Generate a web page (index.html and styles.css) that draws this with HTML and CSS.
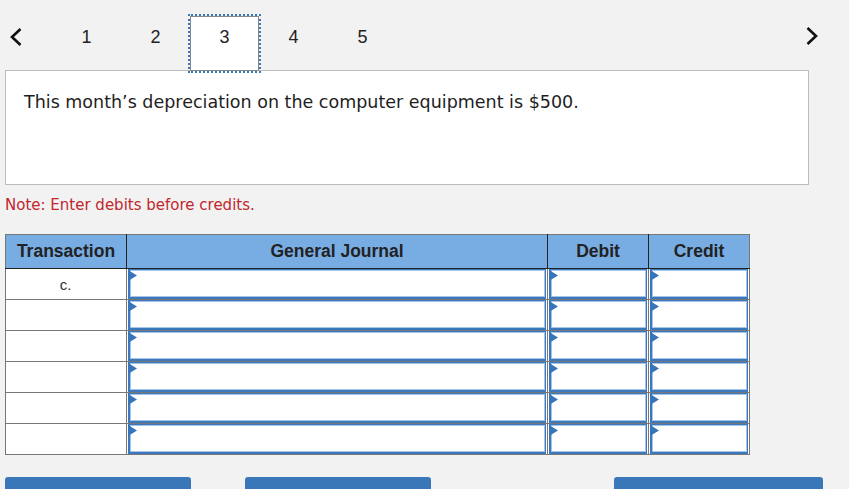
FILE: index.html
```html
<!DOCTYPE html>
<html>
<head>
<meta charset="utf-8">
<link rel="stylesheet" href="styles.css">
</head>
<body>
<div class="page">
  <nav class="pager">
    <span class="chev chev-left">
      <svg width="14" height="20" viewBox="0 0 14 20"><path d="M11.5 2 L3 10 L11.5 18" fill="none" stroke="#111" stroke-width="2.6"/></svg>
    </span>
    <div class="pages">
      <span class="pg">1</span>
      <span class="pg">2</span>
      <span class="pg pg-active">3</span>
      <span class="pg">4</span>
      <span class="pg">5</span>
    </div>
    <span class="chev chev-right">
      <svg width="14" height="20" viewBox="0 0 14 20"><path d="M2.5 2 L11 10 L2.5 18" fill="none" stroke="#111" stroke-width="2.6"/></svg>
    </span>
  </nav>

  <div class="question">This month’s depreciation on the computer equipment is $500.</div>

  <p class="note">Note: Enter debits before credits.</p>

  <table class="journal">
    <thead>
      <tr>
        <th class="c-trans">Transaction</th>
        <th class="c-gj">General Journal</th>
        <th class="c-amt">Debit</th>
        <th class="c-amt last">Credit</th>
      </tr>
    </thead>
    <tbody>
      <tr><td class="trans">c.</td><td class="inp"><div class="box"><i class="flag"></i></div></td><td class="inp"><div class="box"><i class="flag"></i></div></td><td class="inp"><div class="box"><i class="flag"></i></div></td></tr>
      <tr><td class="trans"></td><td class="inp"><div class="box"><i class="flag"></i></div></td><td class="inp"><div class="box"><i class="flag"></i></div></td><td class="inp"><div class="box"><i class="flag"></i></div></td></tr>
      <tr><td class="trans"></td><td class="inp"><div class="box"><i class="flag"></i></div></td><td class="inp"><div class="box"><i class="flag"></i></div></td><td class="inp"><div class="box"><i class="flag"></i></div></td></tr>
      <tr><td class="trans"></td><td class="inp"><div class="box"><i class="flag"></i></div></td><td class="inp"><div class="box"><i class="flag"></i></div></td><td class="inp"><div class="box"><i class="flag"></i></div></td></tr>
      <tr><td class="trans"></td><td class="inp"><div class="box"><i class="flag"></i></div></td><td class="inp"><div class="box"><i class="flag"></i></div></td><td class="inp"><div class="box"><i class="flag"></i></div></td></tr>
      <tr><td class="trans"></td><td class="inp"><div class="box"><i class="flag"></i></div></td><td class="inp"><div class="box"><i class="flag"></i></div></td><td class="inp"><div class="box"><i class="flag"></i></div></td></tr>
    </tbody>
  </table>

  <div class="buttons">
    <span class="btn btn-a"></span>
    <span class="btn btn-b"></span>
    <span class="btn-spacer"></span>
    <span class="btn btn-c"></span>
  </div>
</div>
</body>
</html>
```

FILE: styles.css
```css
html, body {
  margin: 0;
  padding: 0;
  background: #f2f2f2;
  overflow: hidden;
}

.page {
  width: 849px;
  height: 489px;
  overflow: hidden;
  font-family: "DejaVu Sans", Verdana, sans-serif;
}

.pager {
  display: flex;
  align-items: flex-start;
  height: 70px;
  padding-top: 16px;
  box-sizing: border-box;
  position: relative;
  z-index: 2;
}

.chev {
  display: flex;
  width: 52px;
  padding-top: 11px;
}

.chev-left {
  padding-left: 9px;
  box-sizing: border-box;
}

.chev-right {
  margin-left: auto;
  width: auto;
  padding-right: 30px;
  padding-top: 10px;
}

.pages {
  display: flex;
}

.pg {
  display: block;
  width: 69px;
  height: 55px;
  box-sizing: border-box;
  text-align: center;
  font-family: "Liberation Sans", Arial, sans-serif;
  font-size: 18px;
  line-height: 20px;
  padding-top: 11px;
  color: #222;
}

.pg-active {
  background: #fff;
  border: 1px solid #888;
  padding-top: 10px;
  outline: 2px dotted #3a77b8;
  outline-offset: 0;
}

.question {
  margin: 0 40px 0 5px;
  height: 115px;
  box-sizing: border-box;
  background: #fff;
  border: 1px solid #bdbdbd;
  padding: 20px 18px;
  font-size: 17.5px;
  line-height: 22px;
  color: #1e1e1e;
  position: relative;
  z-index: 1;
}

.note {
  margin: 11px 0 0 5px;
  font-size: 15px;
  line-height: 18px;
  color: #c1272d;
}

.journal {
  margin: 20px 0 0 5px;
  border-collapse: collapse;
  border: 1px solid #777;
  font-family: "Liberation Sans", Arial, sans-serif;
  table-layout: fixed;
  width: 744px;
}

.journal th {
  background: #78ade4;
  height: 33px;
  padding: 0;
  font-size: 17.5px;
  font-weight: bold;
  color: #222;
  border-right: 1px solid #222;
  border-bottom: 1px solid #222;
  border-top: 1px solid #777;
  text-align: center;
  vertical-align: middle;
}

.journal th.last {
  border-right: 1px solid #777;
}

.c-trans { width: 120px; }
.c-gj { width: 420px; }
.c-amt { width: 100px; }

.journal td {
  height: 31px;
  padding: 0 1px 0 0;
  border: 1px solid #777;
  background: #fff;
  box-sizing: border-box;
}

.journal td.trans {
  text-align: center;
  vertical-align: top;
  font-size: 15px;
  color: #333;
  padding-top: 7px;
}

.journal td.inp {
  padding: 0 1px 0 1px;
  vertical-align: top;
}

.box {
  position: relative;
  height: 30px;
  box-sizing: border-box;
  border: 1px solid #3b78bc;
  border-left-width: 2px;
  border-bottom-width: 2px;
  box-shadow: inset 0 0 0 1px #a6c4e9;
  background: #fff;
}

.flag {
  position: absolute;
  left: -2px;
  top: 0;
  width: 9px;
  height: 11px;
  background: #3774ba;
  clip-path: polygon(0 0, 100% 50%, 0 100%);
}

.buttons {
  display: flex;
  margin: 22px 0 0 5px;
  gap: 54px;
}

.btn {
  display: block;
  height: 30px;
  background: #3a77b9;
  border-radius: 3px 3px 0 0;
}

.btn-a { width: 186px; }
.btn-b { width: 186px; }
.btn-spacer { flex: 1; margin-left: -54px; }
.btn-c { width: 209px; margin-right: 26px; }
```
